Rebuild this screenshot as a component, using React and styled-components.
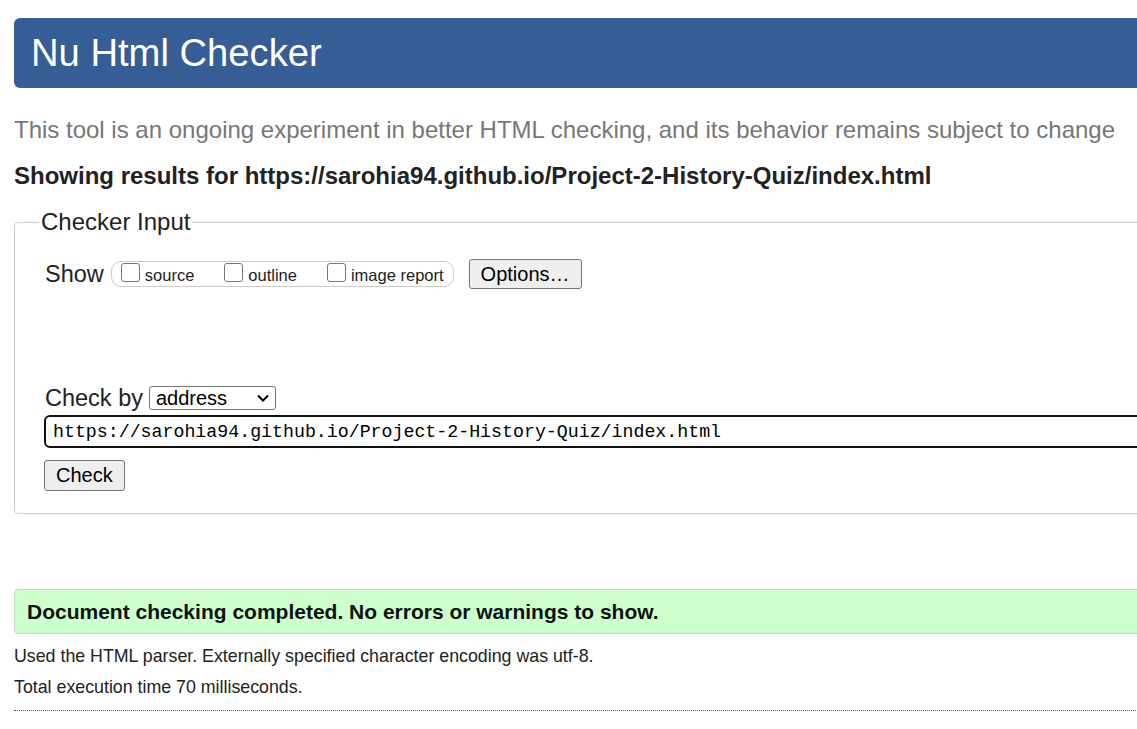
import styled, { createGlobalStyle } from 'styled-components';

const GlobalStyle = createGlobalStyle`
  html, body {
    margin: 0;
    padding: 0;
    background: #fff;
    overflow: hidden;
  }
  body {
    font-family: "Liberation Sans", Arial, sans-serif;
    color: #222;
  }
`;

const Page = styled.div`
  width: 1400px;
  padding: 18px 0 0 14px;
  box-sizing: border-box;
`;

const Header = styled.header`
  height: 70px;
  background: #365d95;
  border-radius: 6px;
  display: flex;
  align-items: center;
  padding-left: 17px;

  h1 {
    margin: 0;
    font-size: 38.2px;
    font-weight: normal;
    color: #fff;
    line-height: 1;
  }
`;

const Intro = styled.p`
  margin: 28px 0 0;
  font-size: 24px;
  line-height: 28px;
  color: #777;
`;

const Results = styled.h2`
  margin: 18px 0 0;
  font-size: 24px;
  line-height: 28px;
  font-weight: bold;
  color: #222;
`;

const Fieldset = styled.fieldset`
  margin: 18px 0 0;
  padding: 0 30px 22px 29px;
  border: 1px solid #ccc;
  border-radius: 4px;
  min-width: 0;

  legend {
    margin-left: -5px;
    padding: 0 2px;
    font-size: 24px;
    line-height: 28px;
    color: #222;
  }
`;

const Row = styled.div`
  display: flex;
  align-items: center;
  gap: ${(p) => p.$gap || 6}px;
  margin-top: ${(p) => p.$top || 0}px;
  height: ${(p) => p.$h || 28}px;
`;

const Label = styled.span`
  font-size: 23.5px;
  color: #222;
  margin-left: 1px;
`;

const ShowGroup = styled.div`
  display: flex;
  align-items: center;
  height: 24px;
  border: 1px solid #ccc;
  border-radius: 10px;
  padding: 0 9px 0 9px;
  margin-left: 1px;
`;

const CheckItem = styled.label`
  display: flex;
  align-items: center;
  font-size: 16.5px;
  color: #222;
  margin-right: ${(p) => (p.$last ? 0 : 30)}px;

  input {
    appearance: none;
    margin: 0 5px 0 0;
    width: 19px;
    height: 19px;
    border: 1px solid #767676;
    border-radius: 3px;
    background: #fff;
    position: relative;
    top: -2px;
  }

  span {
    position: relative;
    top: 1px;
  }
`;

const Button = styled.button`
  font-family: "Liberation Sans", Arial, sans-serif;
  font-size: 20px;
  color: #000;
  background: #efefef;
  border: 1px solid #767676;
  border-radius: 3px;
  height: ${(p) => p.$h || 30}px;
  padding: 0 11px;
  margin-left: ${(p) => p.$ml || 0}px;
`;

const SelectWrap = styled.div`
  position: relative;
  width: 127px;
  height: 24px;

  select {
    appearance: none;
    width: 100%;
    height: 100%;
    box-sizing: border-box;
    border: 1px solid #767676;
    border-radius: 3px;
    background: #fff;
    font-family: "Liberation Sans", Arial, sans-serif;
    font-size: 20px;
    color: #000;
    padding: 0 0 0 6px;
  }

  svg {
    position: absolute;
    right: 6px;
    top: 7px;
    pointer-events: none;
  }
`;

const UrlInput = styled.input`
  display: block;
  box-sizing: border-box;
  width: 1300px;
  height: 33px;
  margin-top: 3px;
  border: 2px solid #111;
  border-radius: 6px;
  padding: 0 0 0 7px;
  font-family: "Liberation Mono", "DejaVu Sans Mono", monospace;
  font-size: 18.25px;
  color: #000;
  outline: none;
`;

const ButtonRow = styled.div`
  margin-top: 12px;
`;

const Success = styled.div`
  margin-top: 75px;
  height: 45px;
  box-sizing: border-box;
  display: flex;
  align-items: center;
  padding-left: 12px;
  background: #ccffcc;
  border: 1px solid #bbddbb;
  border-radius: 4px;
  font-size: 21px;
  font-weight: bold;
  color: #111;
`;

const Detail = styled.p`
  margin: ${(p) => p.$top}px 0 0;
  font-size: 17.8px;
  line-height: 20px;
  color: #222;
`;

const Rule = styled.hr`
  margin: 13px 0 0;
  border: 0;
  border-top: 1px dotted #555;
`;

const Chevron = () => (
  <svg width="14" height="10" viewBox="0 0 14 10">
    <path d="M2 2.5 L7 7.5 L12 2.5" fill="none" stroke="#000" strokeWidth="2" />
  </svg>
);

const App = () => {
  const url = 'https://sarohia94.github.io/Project-2-History-Quiz/index.html';
  return (
    <Page>
      <GlobalStyle />
      <Header>
        <h1>Nu Html Checker</h1>
      </Header>
      <Intro>
        This tool is an ongoing experiment in better HTML checking, and its behavior remains
        subject to change
      </Intro>
      <Results>Showing results for {url}</Results>
      <Fieldset>
        <legend>Checker Input</legend>
        <Row $top={23} $h={30}>
          <Label>Show</Label>
          <ShowGroup>
            <CheckItem>
              <input type="checkbox" />
              <span>source</span>
            </CheckItem>
            <CheckItem>
              <input type="checkbox" />
              <span>outline</span>
            </CheckItem>
            <CheckItem $last>
              <input type="checkbox" />
              <span>image report</span>
            </CheckItem>
          </ShowGroup>
          <Button $ml={9}>Options…</Button>
        </Row>
        <Row $top={95} $h={28}>
          <Label>Check by</Label>
          <SelectWrap>
            <select defaultValue="address">
              <option value="address">address</option>
              <option value="upload">file upload</option>
              <option value="text">text input</option>
            </select>
            <Chevron />
          </SelectWrap>
        </Row>
        <UrlInput type="url" defaultValue={url} />
        <ButtonRow>
          <Button $h={31}>Check</Button>
        </ButtonRow>
      </Fieldset>
      <Success>Document checking completed. No errors or warnings to show.</Success>
      <Detail $top={12}>
        Used the HTML parser. Externally specified character encoding was utf-8.
      </Detail>
      <Detail $top={11}>Total execution time 70 milliseconds.</Detail>
      <Rule />
    </Page>
  );
};

export default App;
